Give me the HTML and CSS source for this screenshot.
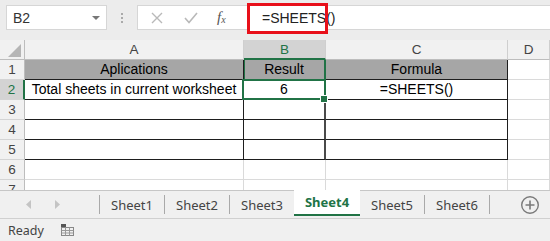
FILE: index.html
```html
<!DOCTYPE html>
<html lang="en">
<head>
  <meta charset="UTF-8" />
  <title>SHEETS function</title>
  <link rel="stylesheet" href="styles.css">
</head>
<body>

  <div class="formula-bar">
    <div class="name-box"><span>B2</span><span class="caret"></span></div>
    <div class="grip"><i></i><i></i><i></i></div>
    <div class="fx-buttons">
      <svg width="12" height="12" viewBox="0 0 12 12"><path d="M1 1 L11 11 M11 1 L1 11" stroke="#b9b9b9" stroke-width="1.4" fill="none"/></svg>
      <svg width="14" height="12" viewBox="0 0 14 12"><path d="M1 6 L5 10.5 L13 1" stroke="#b9b9b9" stroke-width="1.6" fill="none"/></svg>
      <span class="fx"><i>f</i><sub>x</sub></span>
    </div>
    <div class="formula-input"><span class="formula-text">=SHEETS()</span></div>
  </div>

  <div class="sheet">
    <div class="c corner"><span class="tri"></span></div>
    <div class="c colh">A</div>
    <div class="c colh active">B</div>
    <div class="c colh">C</div>
    <div class="c colh">D</div>

    <div class="c rowh">1</div>
    <div class="c t head">Aplications</div>
    <div class="c t head b-col">Result</div>
    <div class="c t head">Formula</div>
    <div class="c"></div>

    <div class="c rowh active">2</div>
    <div class="c t">Total sheets in current worksheet</div>
    <div class="c t b-col selected">6</div>
    <div class="c t">=SHEETS()</div>
    <div class="c"></div>

    <div class="c rowh">3</div>
    <div class="c t"></div>
    <div class="c t b-col"></div>
    <div class="c t"></div>
    <div class="c"></div>

    <div class="c rowh">4</div>
    <div class="c t"></div>
    <div class="c t b-col"></div>
    <div class="c t"></div>
    <div class="c"></div>

    <div class="c rowh">5</div>
    <div class="c t"></div>
    <div class="c t b-col"></div>
    <div class="c t"></div>
    <div class="c"></div>

    <div class="c rowh">6</div>
    <div class="c"></div>
    <div class="c"></div>
    <div class="c"></div>
    <div class="c"></div>

    <div class="c rowh">7</div>
    <div class="c"></div>
    <div class="c"></div>
    <div class="c"></div>
    <div class="c"></div>
  </div>

  <div class="tabs">
    <div class="nav">
      <svg width="6" height="9" viewBox="0 0 6 9"><path d="M5 0 L0 4.5 L5 9 Z" fill="#c4c4c4"/></svg>
      <svg width="6" height="9" viewBox="0 0 6 9"><path d="M0 0 L5 4.5 L0 9 Z" fill="#c4c4c4"/></svg>
    </div>
    <div class="tab">Sheet1</div>
    <div class="tab">Sheet2</div>
    <div class="tab">Sheet3</div>
    <div class="tab current">Sheet4</div>
    <div class="tab">Sheet5</div>
    <div class="tab">Sheet6</div>
    <div class="add">
      <svg width="20" height="20" viewBox="0 0 20 20"><circle cx="10" cy="10" r="8.3" stroke="#7a7a7a" stroke-width="1.4" fill="none"/><path d="M10 5.5 V14.5 M5.5 10 H14.5" stroke="#7a7a7a" stroke-width="1.6"/></svg>
    </div>
  </div>

  <div class="status">
    <span>Ready</span>
    <svg width="13" height="12" viewBox="0 0 13 12">
      <rect x="0" y="0" width="5" height="3" fill="#555"/>
      <rect x="0.5" y="3.5" width="12" height="8" fill="none" stroke="#888" stroke-width="1"/>
      <path d="M0.5 6.5 H12.5 M0.5 9 H12.5 M4.5 3.5 V11.5 M8.5 3.5 V11.5" stroke="#999" stroke-width="1"/>
    </svg>
  </div>

</body>
</html>
```

FILE: styles.css
```css
body {
  margin: 0;
  width: 550px;
  height: 241px;
  overflow: hidden;
  font-family: 'Liberation Sans', Arial, sans-serif;
  background: #f0f0f0;
  color: #222;
}

/* formula bar */
.formula-bar {
  display: flex;
  align-items: flex-start;
  height: 40px;
  padding-top: 5px;
  box-sizing: border-box;
  background: #ececec;
}

.name-box {
  display: flex;
  align-items: center;
  justify-content: space-between;
  margin-left: 6px;
  width: 101px;
  height: 25px;
  box-sizing: border-box;
  padding: 0 6px 0 6px;
  background: #fff;
  border: 1px solid #d6d6d6;
  font-size: 14px;
  color: #333;
}

.caret {
  width: 0;
  height: 0;
  border-left: 4px solid transparent;
  border-right: 4px solid transparent;
  border-top: 4px solid #777;
}

.grip {
  width: 30px;
  height: 25px;
  display: flex;
  flex-direction: column;
  align-items: center;
  justify-content: center;
  gap: 2px;
}

.grip i {
  width: 2px;
  height: 2px;
  background: #aaa;
}

.fx-buttons {
  display: flex;
  align-items: center;
  width: 110px;
  height: 25px;
  box-sizing: border-box;
  padding-left: 13px;
  gap: 21px;
  background: #fff;
  border: 1px solid #d6d6d6;
  border-right: none;
}

.fx {
  font-family: 'Liberation Serif', serif;
  font-size: 15px;
  color: #555;
  margin-left: -2px;
}

.fx sub {
  font-size: 10px;
  font-style: italic;
  vertical-align: -1px;
}

.formula-input {
  flex: 1;
  height: 25px;
  box-sizing: border-box;
  background: #fff;
  border: 1px solid #d6d6d6;
  border-right: none;
}

.formula-text {
  display: inline-block;
  margin-left: 2px;
  width: 75px;
  height: 25px;
  box-sizing: border-box;
  padding-left: 12px;
  line-height: 24px;
  font-size: 14px;
  color: #222;
  outline: 3px solid #e8101a;
  background: #fff;
}

/* grid */
.sheet {
  display: grid;
  grid-template-columns: 25px 219px 82px 182px 42px;
  grid-auto-rows: 20px;
  height: 150px;
  overflow: hidden;
  background: #fff;
}

.c {
  box-sizing: border-box;
  border-right: 1px solid #dadada;
  border-bottom: 1px solid #dadada;
  font-size: 14px;
  line-height: 19px;
  text-align: center;
  white-space: nowrap;
  position: relative;
}

.corner {
  background: #f1f1f1;
  border-right-color: #bdbdbd;
  border-bottom-color: #bdbdbd;
}

.tri {
  position: absolute;
  right: 3px;
  bottom: 2px;
  width: 0;
  height: 0;
  border-left: 13px solid transparent;
  border-bottom: 13px solid #b5b5b5;
}

.colh {
  background: #f1f1f1;
  color: #444;
  border-right-color: #cfcfcf;
  border-bottom-color: #bdbdbd;
  font-size: 13.5px;
}

.colh.active {
  background: #d3d3d3;
  color: #217346;
  border-bottom: 2px solid #217346;
}

.rowh {
  background: #f1f1f1;
  color: #444;
  border-right-color: #bdbdbd;
  border-bottom-color: #d4d4d4;
  font-size: 13.5px;
}

.rowh.active {
  background: #d3d3d3;
  color: #217346;
  border-right: 2px solid #217346;
}

.t {
  border-right-color: #1e1e1e;
  border-bottom-color: #1e1e1e;
  color: #000;
}

.b-col {
  border-right: 2px solid #4a4a4a;
}

.head {
  background: #a6a6a6;
}

.head.b-col {
  box-shadow: inset 1px 0 #217346;
  border-right-color: #217346;
}

.selected::after {
  content: "";
  position: absolute;
  left: -2px;
  top: -1px;
  right: -2px;
  bottom: -1px;
  border: 2px solid #217346;
}

.selected::before {
  content: "";
  position: absolute;
  right: -4px;
  bottom: -4px;
  width: 6px;
  height: 6px;
  background: #217346;
  border: 1px solid #fff;
  z-index: 1;
}

/* sheet tabs */
.tabs {
  display: flex;
  align-items: stretch;
  height: 29px;
  box-sizing: border-box;
  border-top: 1px solid #c6c6c6;
  border-bottom: 1px solid #d0d0d0;
  background: #f0f0f0;
  font-family: 'Noto Sans', sans-serif;
  font-size: 13px;
  color: #444;
}

.nav {
  display: flex;
  align-items: center;
  gap: 23px;
  width: 100px;
  padding-left: 26px;
  box-sizing: border-box;
  border-right: 1px solid #a9a9a9;
  margin: 4px 0 4px 0;
}

.tab {
  width: 65px;
  display: flex;
  align-items: center;
  justify-content: center;
  box-sizing: border-box;
  border-right: 1px solid #a9a9a9;
  margin: 4px 0;
}

.tab.current {
  margin: -1px 0 2px 0;
  background: #fff;
  color: #217346;
  font-weight: bold;
  border-right: none;
  border-bottom: 2px solid #217346;
  margin-left: -1px;
  width: 66px;
}

.add {
  flex: 1;
  display: flex;
  align-items: center;
  justify-content: flex-end;
  padding-right: 10px;
}

/* status bar */
.status {
  display: flex;
  align-items: center;
  gap: 17px;
  height: 22px;
  padding-left: 8px;
  background: #f0f0f0;
  font-family: 'Noto Sans', sans-serif;
  font-size: 12.5px;
  color: #444;
}
```
